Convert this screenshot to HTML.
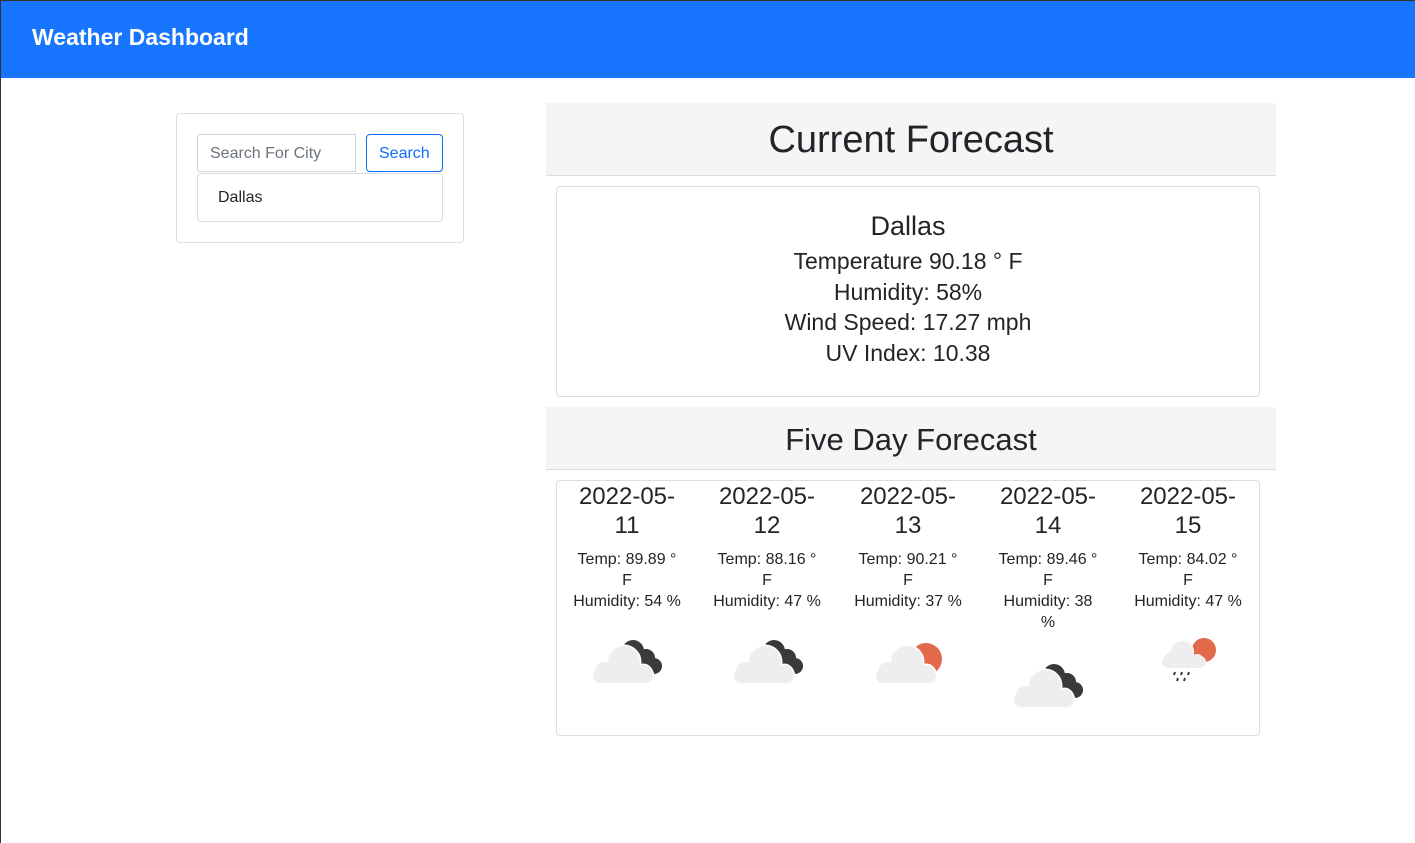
<!DOCTYPE html>
<html><head><style>
*{box-sizing:border-box;margin:0;padding:0}
body{width:1415px;height:843px;position:relative;background:#fff;font-family:"Liberation Sans",sans-serif;color:#212529;overflow:hidden}
.a{position:absolute}
.nav{left:0;top:0;width:1415px;height:78px;background:#1875fe}
.nav span{position:absolute;left:32px;top:24px;color:#fff;font-weight:bold;font-size:23px}
.box{border:1px solid #ddd;border-radius:4px}
.c{text-align:center}
.col{position:absolute;top:481px;width:140px;text-align:center}
.col h3{font-weight:normal;font-size:24px;line-height:29px;margin-top:1px}
.col p{font-size:16px;line-height:21px;margin-top:9px;padding:0 6px}
</style></head><body>
<div class="a nav"><span>Weather Dashboard</span></div>
<div class="a" style="left:0;top:0;width:1415px;height:1px;background:#333"></div>
<div class="a" style="left:0;top:0;width:1px;height:843px;background:#333"></div>
<div class="a box" style="left:176px;top:113px;width:288px;height:130px"></div>
<div class="a" style="left:197px;top:134px;width:159px;height:38px;border:1px solid #ced4da;border-radius:3px 0 0 3px;color:#6c757d;font-size:16px;padding:10px 12px">Search For City</div>
<div class="a" style="left:366px;top:134px;width:77px;height:38px;border:1px solid #0d6efd;border-radius:4px;color:#0d6efd;font-size:16px;padding:10px 12px">Search</div>
<div class="a box" style="left:197px;top:173px;width:246px;height:49px;font-size:16px;padding:15px 20px">Dallas</div>
<div class="a c" style="left:546px;top:103px;width:730px;height:73px;background:#f5f5f5;border-bottom:1px solid #ddd;font-size:38px;line-height:75px">Current Forecast</div>
<div class="a box c" style="left:556px;top:186px;width:704px;height:211px">
<div style="font-size:27px;margin-top:23px;line-height:32px">Dallas</div>
<div style="font-size:23px;line-height:30.5px;margin-top:4px">Temperature 90.18 ° F<br>Humidity: 58%<br>Wind Speed: 17.27 mph<br>UV Index: 10.38</div>
</div>
<div class="a c" style="left:546px;top:407px;width:730px;height:63px;background:#f5f5f5;border-bottom:1px solid #ddd;font-size:31px;line-height:65px">Five Day Forecast</div>
<div class="a box" style="left:556px;top:480px;width:704px;height:256px"></div>
<svg width="0" height="0" style="position:absolute"><defs>
<g id="lt" fill="#eeeeee"><rect x="0" y="32" width="60" height="14" rx="7"/><circle cx="12" cy="35" r="10"/><circle cx="31" cy="25" r="16"/><circle cx="50" cy="37" r="9"/></g>
<g id="dk"><g fill="#3a3a3c"><circle cx="40" cy="14" r="11"/><circle cx="53" cy="21" r="9"/><circle cx="61" cy="29" r="8"/><rect x="40" y="28" width="21" height="9"/></g><g stroke="#fff" stroke-width="3"><use href="#lt"/></g><use href="#lt"/></g>
<g id="sun"><circle cx="50" cy="22" r="16" fill="#e2694a"/><g stroke="#fff" stroke-width="3"><use href="#lt"/></g><use href="#lt"/></g>
</defs></svg>
<div class="col" style="left:557px"><h3>2022-05-<br>11</h3><p>Temp: 89.89 °<br>F<br>Humidity: 54 %</p><svg class="a" style="left:36px;top:156px" width="72" height="50"><use href="#dk"/></svg></div>
<div class="col" style="left:697px"><h3>2022-05-<br>12</h3><p>Temp: 88.16 °<br>F<br>Humidity: 47 %</p><svg class="a" style="left:37px;top:156px" width="72" height="50"><use href="#dk"/></svg></div>
<div class="col" style="left:838px"><h3>2022-05-<br>13</h3><p>Temp: 90.21 °<br>F<br>Humidity: 37 %</p><svg class="a" style="left:38px;top:156px" width="72" height="50"><use href="#sun"/></svg></div>
<div class="col" style="left:978px"><h3>2022-05-<br>14</h3><p>Temp: 89.46 °<br>F<br>Humidity: 38<br>%</p><svg class="a" style="left:36px;top:180px" width="72" height="50"><use href="#dk"/></svg></div>
<div class="col" style="left:1118px"><h3>2022-05-<br>15</h3><p>Temp: 84.02 °<br>F<br>Humidity: 47 %</p><svg class="a" style="left:44px;top:153px" width="56" height="56"><circle cx="42" cy="16" r="12" fill="#e2694a"/><g fill="#eeeeee" stroke="#fff" stroke-width="2"><circle cx="20" cy="18" r="11"/></g><g fill="#eeeeee"><rect x="0" y="22" width="44" height="12" rx="6"/><circle cx="9" cy="25" r="7"/><circle cx="20" cy="18" r="11"/><circle cx="35" cy="27" r="7"/></g><g stroke="#3a3a3c" stroke-width="2"><path d="M13 38l-1 3M20 38l-1 3M27 38l-1 3M16 44l-1 3M23 44l-1 3"/></g></svg></div>
</body></html>
